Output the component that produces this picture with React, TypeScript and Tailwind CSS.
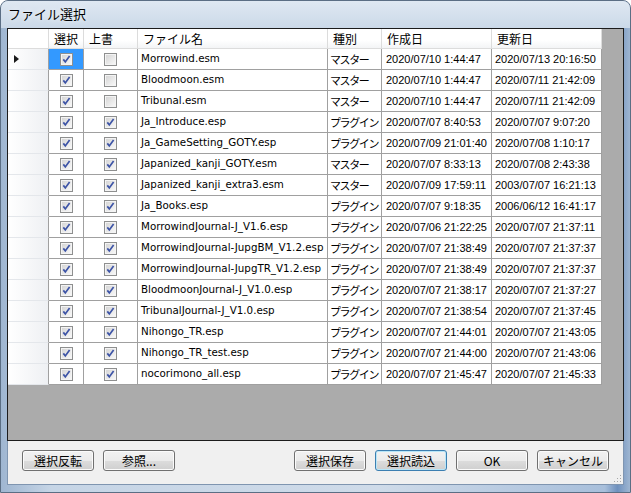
import React from 'react';

type Row = {
  name: string;
  kind: 'マスター' | 'プラグイン';
  created: string;
  updated: string;
  sel: boolean;
  over: boolean;
};

const ROWS: Row[] = [
  { name: 'Morrowind.esm', kind: 'マスター', created: '2020/07/10 1:44:47', updated: '2020/07/13 20:16:50', sel: true, over: false },
  { name: 'Bloodmoon.esm', kind: 'マスター', created: '2020/07/10 1:44:47', updated: '2020/07/11 21:42:09', sel: true, over: false },
  { name: 'Tribunal.esm', kind: 'マスター', created: '2020/07/10 1:44:47', updated: '2020/07/11 21:42:09', sel: true, over: false },
  { name: 'Ja_Introduce.esp', kind: 'プラグイン', created: '2020/07/07 8:40:53', updated: '2020/07/07 9:07:20', sel: true, over: true },
  { name: 'Ja_GameSetting_GOTY.esp', kind: 'プラグイン', created: '2020/07/09 21:01:40', updated: '2020/07/08 1:10:17', sel: true, over: true },
  { name: 'Japanized_kanji_GOTY.esm', kind: 'マスター', created: '2020/07/07 8:33:13', updated: '2020/07/08 2:43:38', sel: true, over: true },
  { name: 'Japanized_kanji_extra3.esm', kind: 'マスター', created: '2020/07/09 17:59:11', updated: '2003/07/07 16:21:13', sel: true, over: true },
  { name: 'Ja_Books.esp', kind: 'プラグイン', created: '2020/07/07 9:18:35', updated: '2006/06/12 16:41:17', sel: true, over: true },
  { name: 'MorrowindJournal-J_V1.6.esp', kind: 'プラグイン', created: '2020/07/06 21:22:25', updated: '2020/07/07 21:37:11', sel: true, over: true },
  { name: 'MorrowindJournal-JupgBM_V1.2.esp', kind: 'プラグイン', created: '2020/07/07 21:38:49', updated: '2020/07/07 21:37:37', sel: true, over: true },
  { name: 'MorrowindJournal-JupgTR_V1.2.esp', kind: 'プラグイン', created: '2020/07/07 21:38:49', updated: '2020/07/07 21:37:37', sel: true, over: true },
  { name: 'BloodmoonJournal-J_V1.0.esp', kind: 'プラグイン', created: '2020/07/07 21:38:17', updated: '2020/07/07 21:37:27', sel: true, over: true },
  { name: 'TribunalJournal-J_V1.0.esp', kind: 'プラグイン', created: '2020/07/07 21:38:54', updated: '2020/07/07 21:37:45', sel: true, over: true },
  { name: 'Nihongo_TR.esp', kind: 'プラグイン', created: '2020/07/07 21:44:01', updated: '2020/07/07 21:43:05', sel: true, over: true },
  { name: 'Nihongo_TR_test.esp', kind: 'プラグイン', created: '2020/07/07 21:44:00', updated: '2020/07/07 21:43:06', sel: true, over: true },
  { name: 'nocorimono_all.esp', kind: 'プラグイン', created: '2020/07/07 21:45:47', updated: '2020/07/07 21:45:33', sel: true, over: true },
];

const jp = "font-['Noto_Sans_CJK_JP',sans-serif]";
const latin = "font-['DejaVu_Sans','Noto_Sans_CJK_JP',sans-serif]";
const narrow = "font-['Liberation_Sans','Noto_Sans_CJK_JP',sans-serif]";

function CheckBox({ checked }: { checked: boolean }) {
  return (
    <svg width="13" height="13" viewBox="0 0 13 13" className="block">
      <defs>
        <linearGradient id="cbfill" x1="0" y1="0" x2="1" y2="1">
          <stop offset="0" stopColor="#d6d6d6" />
          <stop offset="1" stopColor="#f7f7f7" />
        </linearGradient>
      </defs>
      <rect x="0.5" y="0.5" width="12" height="12" fill="#f4f4f4" stroke="#8e8f8f" />
      <rect x="2" y="2" width="9" height="9" fill="url(#cbfill)" />
      {checked && (
        <path d="M3.3 6.4 L5.3 8.9 L9.6 2.9" fill="none" stroke="#3d54a6" strokeWidth="1.7" />
      )}
    </svg>
  );
}

function Button({ label, isDefault = false }: { label: string; isDefault?: boolean }) {
  return (
    <button
      className={`w-[72px] h-[21px] rounded-[3px] border text-[12px] text-black leading-none ${jp} bg-[linear-gradient(180deg,#f2f2f2_0%,#ebebeb_50%,#dddddd_50%,#cfcfcf_100%)] ${
        isDefault
          ? 'border-[#3c7fb1] shadow-[inset_0_0_0_1px_#b8e6f8]'
          : 'border-[#707070] shadow-[inset_0_0_0_1px_#fbfbfb]'
      }`}
    >
      {label}
    </button>
  );
}

const cell = 'h-full flex items-center border-r border-b border-[#a0a0a0] shrink-0 whitespace-nowrap overflow-hidden text-black';

export default function App() {
  return (
    <div className="w-[631px] h-[493px] flex flex-col rounded-t-[8px] border border-[#5b6e84] overflow-hidden bg-[linear-gradient(90deg,#9fb6d1_0%,#c6d5e6_8%,#cfdbe9_60%,#a8bfdb_96%,#6f91be_98%,#9fb6d1_100%)]">
      {/* title bar */}
      <div className="h-[27px] shrink-0 flex items-center pl-[7px] pb-[1px] bg-[linear-gradient(180deg,#dfe8f2,#cbd9e8)]">
        <span className={`text-[13px] text-black ${jp} [text-shadow:0_0_6px_#ffffff]`}>ファイル選択</span>
      </div>

      {/* client area */}
      <div className="relative flex-1 flex flex-col mx-[6px] mb-[7px] bg-[#f0f0f0] border-l border-r border-b border-[#7f95b0]">
        {/* grid */}
        <div className="-mx-px h-[413px] shrink-0 border border-[#1c1c1c] bg-[#ababab] flex flex-col">
          {/* header */}
          <div className={`h-[20px] flex shrink-0 text-[12px] text-black ${jp}`}>
            <div className="w-[41px] h-full bg-white border-r border-b border-[#dcdcdc]" />
            {[
              ['選択', 'w-[35px]'],
              ['上書', 'w-[54px]'],
              ['ファイル名', 'w-[190px]'],
              ['種別', 'w-[54px]'],
              ['作成日', 'w-[110px]'],
              ['更新日', 'w-[110px]'],
            ].map(([t, w]) => (
              <div
                key={t}
                className={`${w} h-full flex items-center pl-[5px] bg-[linear-gradient(180deg,#ffffff_0%,#ffffff_60%,#f3f4f6_100%)] border-r border-b border-[#dcdcdc]`}
              >
                {t}
              </div>
            ))}
          </div>

          {/* rows */}
          {ROWS.map((r, i) => (
            <div key={r.name} className="h-[21px] flex shrink-0">
              <div className="w-[41px] h-full flex items-center pl-[6px] bg-[linear-gradient(90deg,#ffffff,#eef0f3)] border-r border-b border-r-[#a0a0a0] border-b-[#e4e7eb]">
                {i === 0 && (
                  <svg width="5" height="8" viewBox="0 0 5 8">
                    <path d="M0 0 L5 4 L0 8 Z" fill="#1a1a1a" />
                  </svg>
                )}
              </div>
              <div className={`${cell} w-[35px] justify-center ${i === 0 ? 'bg-[#3399ff]' : 'bg-white'}`}>
                <CheckBox checked={r.sel} />
              </div>
              <div className={`${cell} w-[54px] justify-center bg-white`}>
                <CheckBox checked={r.over} />
              </div>
              <div className={`${cell} w-[190px] pl-[3px] bg-white text-[10.3px] ${latin}`}>
                {r.name}
              </div>
              <div className={`${cell} w-[54px] pl-[2px] bg-white text-[11px] tracking-[-1.4px] ${jp}`}>
                {r.kind}
              </div>
              <div className={`${cell} w-[110px] pl-[4px] bg-white text-[11px] ${narrow}`}>
                {r.created}
              </div>
              <div className={`${cell} w-[110px] pl-[3px] bg-white text-[11px] ${narrow}`}>
                {r.updated}
              </div>
            </div>
          ))}
        </div>

        {/* buttons */}
        <div className="flex-1 flex items-start pt-[9px] px-[14px]">
          <div className="flex gap-[9px]">
            <Button label="選択反転" />
            <Button label="参照..." />
          </div>
          <div className="flex-1" />
          <div className="flex gap-[9px]">
            <Button label="選択保存" />
            <Button label="選択読込" isDefault />
            <Button label="OK" />
            <Button label="キャンセル" />
          </div>
        </div>

        {/* size grip */}
        <svg width="10" height="10" viewBox="0 0 10 10" className="absolute right-[1px] bottom-[1px]">
          {[
            [8, 2], [8, 5], [5, 5], [8, 8], [5, 8], [2, 8],
          ].map(([x, y]) => (
            <rect key={`${x}-${y}`} x={x} y={y} width="1" height="1" fill="#a6a6a6" />
          ))}
        </svg>
      </div>
    </div>
  );
}
